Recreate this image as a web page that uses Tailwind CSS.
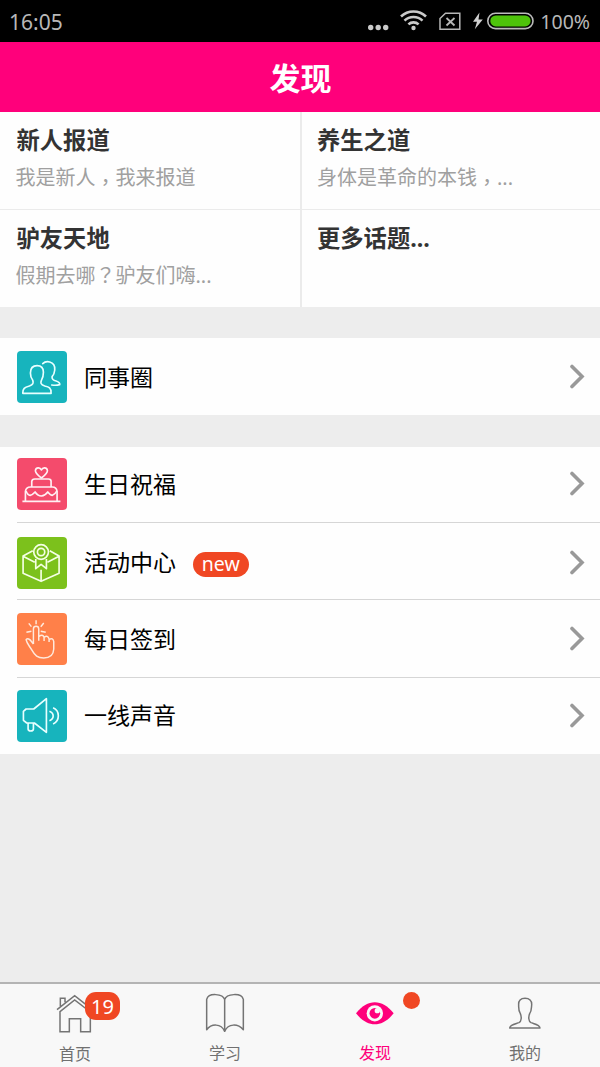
<!DOCTYPE html>
<html lang="zh-CN">
<head>
<meta charset="utf-8">
<title>发现</title>
<script src="https://cdn.jsdelivr.net/npm/@tailwindcss/browser@4"></script>
</head>
<body class="w-[600px] h-[1067px] overflow-hidden flex flex-col bg-[#ededed] font-['Noto_Sans','Noto_Sans_CJK_SC',sans-serif] text-black">

<!-- Status bar -->
<div class="h-[42px] shrink-0 bg-black flex items-center justify-between pl-[9px] pr-[10px] font-['Noto_Sans',sans-serif] text-[#b8b8b8]">
  <span class="text-[21px] leading-[42px] pt-[2px]">16:05</span>
  <div class="flex items-center">
    <svg class="w-[172px] h-[42px]" viewBox="0 0 172 42" fill="none">
      <g fill="#cacaca"><circle cx="2.7" cy="27.5" r="2.7"/><circle cx="10.2" cy="27.5" r="2.7"/><circle cx="17.7" cy="27.5" r="2.7"/><circle cx="45.5" cy="28" r="2.2"/></g>
      <g stroke="#cacaca" stroke-width="2.6"><path d="M33 16.5a18 18 0 0 1 25 0"/><path d="M36.5 20.6a13 13 0 0 1 18 0"/><path d="M40.4 24.4a7.5 7.5 0 0 1 10.2 0"/></g>
      <path d="M77.500 13.200H91.800V29.300H72V18.500Z" stroke="#b8b8b8" stroke-width="1.5"/>
      <path d="M78.500 18L86.500 25.500M86.500 18L78.500 25.500" stroke="#b8b8b8" stroke-width="1.8"/>
      <path d="M111.5 12.5L105 21.8H109L106.8 29.3L114.8 19.4H110.5Z" fill="#d0d0d0"/>
      <rect x="119.8" y="13.2" width="45.2" height="15.4" rx="7.7" stroke="#bcbcbc" stroke-width="1.6"/>
      <rect x="122.3" y="15.4" width="40.3" height="11" rx="5.5" fill="#4ec30b"/>
    </svg>
    <span class="text-[19.5px] leading-[42px] pt-[1px]">100%</span>
  </div>
</div>

<header class="h-[69.5px] shrink-0 bg-[#ff007b] flex items-center justify-center">
  <h1 class="text-white text-[31px] leading-[46px] font-bold pt-[3px] pl-[1px]">发现</h1>
</header>

<!-- Topics -->
<section class="h-[195px] shrink-0 grid grid-cols-[300px_298.5px] grid-rows-[97px_96.5px] gap-[1.5px] bg-[#ebebeb]">
  <div class="bg-[#fefefe] pl-[16.5px] pt-[11px]">
    <h2 class="text-[23.3px] leading-[34px] font-bold text-[#333]">新人报道</h2>
    <p class="text-[20px] leading-[30px] pt-[6px] ml-[-1px] text-[#a0a0a0]">我是新人<span class="inline-block leading-none font-['Noto_Sans_CJK_TC'] translate-y-[5px]">，</span>我来报道</p>
  </div>
  <div class="bg-[#fefefe] pl-[15.5px] pt-[11px]">
    <h2 class="text-[23.3px] leading-[34px] font-bold text-[#333]">养生之道</h2>
    <p class="text-[20px] leading-[30px] pt-[6px] text-[#a0a0a0]">身体是革命的本钱<span class="inline-block leading-none font-['Noto_Sans_CJK_TC'] translate-y-[5px]">，</span>...</p>
  </div>
  <div class="bg-[#fefefe] pl-[16.5px] pt-[11px]">
    <h2 class="text-[23.3px] leading-[34px] font-bold text-[#333]">驴友天地</h2>
    <p class="text-[20px] leading-[30px] pt-[6px] ml-[-1px] text-[#a0a0a0]">假期去哪<span class="inline-block leading-none font-['Noto_Sans_CJK_TC']">？</span>驴友们嗨...</p>
  </div>
  <div class="bg-[#fefefe] pl-[15.5px] pt-[11px]">
    <h2 class="text-[23.3px] leading-[34px] font-bold text-[#333]">更多话题...</h2>
  </div>
</section>

<section class="mt-[31.5px] h-[77px] shrink-0 bg-[#fefefe] pl-[16.5px] pr-[15px] pt-[1px] flex items-center">
  <svg class="w-[50.5px] h-[52px] rounded-[4px] bg-[#17b4bd]" viewBox="0 0 151 156" fill="none" stroke="#e8ffff" stroke-width="5" stroke-linejoin="round" stroke-linecap="round">
    <path d="M17 127H102C103 110 95 108 83 105C70 101 70 95 73 88C78 80 79 72 79 64C79 50 72 44 60 44C47 44 40 52 40 66C40 75 42 82 47 88C50 96 48 101 37 105C22 109 17 112 17 127Z"/>
    <path d="M77 38C82 33 90 31 98 33C110 36 114 45 113 57C112 67 110 72 105 77C104 84 108 88 117 90C126 93 129 96 128 101Q117 104 104 102"/>
  </svg>
  <span class="ml-[17px] text-[23px] leading-[34px] flex-1">同事圈</span>
  <svg class="w-[16px] h-[26px]" viewBox="0 0 16 26" fill="none" stroke="#999" stroke-width="3.6" stroke-linecap="round"><path d="M3 2.5L13 12.5L3 22.5"/></svg>
</section>

<section class="mt-[32px] h-[306.5px] shrink-0 bg-[#fefefe] pl-[16.5px] flex flex-col">
  <div class="h-[76px] pr-[15px] pb-[1px] flex items-center border-b-[1.5px] border-[#d6d6d6]">
    <svg class="w-[50.5px] h-[52px] rounded-[4px] bg-[#f44b6c]" viewBox="0 0 151 156" fill="none" stroke="#fff0f3" stroke-width="5" stroke-linejoin="round">
      <path d="M16 130H130M25 130V100Q27 87 40 87H106Q118 87 120 100V130M44 86V70Q45 63 53 63H94Q102 63 102 70V86"/>
      <path d="M27 99Q32 112 39 112Q47 110 54 102Q62 114 73 114Q84 113 92 102Q100 112 106 112Q114 109 119 99"/>
      <path d="M73 60C60 50 54 44 55 37C57 28 69 27 73 36C77 27 89 28 91 37C92 44 86 50 73 60Z"/>
    </svg>
    <span class="ml-[17px] text-[23px] leading-[34px] pb-[1px] flex-1">生日祝福</span>
    <svg class="w-[16px] h-[26px]" viewBox="0 0 16 26" fill="none" stroke="#999" stroke-width="3.6" stroke-linecap="round"><path d="M3 2.5L13 12.5L3 22.5"/></svg>
  </div>
  <div class="h-[77px] pr-[15px] pt-[3px] flex items-center border-b-[1.5px] border-[#d6d6d6]">
    <svg class="w-[50.5px] h-[52px] rounded-[4px] bg-[#7cc11c]" viewBox="0 0 151 156" fill="none" stroke="#f4ffe4" stroke-width="5" stroke-linejoin="round">
      <circle cx="72" cy="45" r="22"/><circle cx="72" cy="45" r="11"/>
      <path d="M56 66V95L72 82L88 95V66"/>
      <path d="M47 41L18 57V109L72 133L126 109V57L98 41M18 58L53 76M126 58L91 76M72 98V133"/>
    </svg>
    <span class="ml-[17px] text-[23px] leading-[34px] pb-[2px]">活动中心</span>
    <span class="ml-[17px] mt-[3px] w-[55.5px] h-[25px] rounded-full bg-[#f04723] text-white text-[19.5px] leading-[23px] text-center">new</span>
    <svg class="ml-auto w-[16px] h-[26px]" viewBox="0 0 16 26" fill="none" stroke="#999" stroke-width="3.6" stroke-linecap="round"><path d="M3 2.5L13 12.5L3 22.5"/></svg>
  </div>
  <div class="h-[78px] pr-[15px] pt-[1px] flex items-center border-b-[1.5px] border-[#d6d6d6]">
    <svg class="w-[50.5px] h-[52px] rounded-[4px] bg-[#ff8049]" viewBox="0 0 151 156" fill="none" stroke="#ffe9dc" stroke-width="4.4" stroke-linejoin="round">
      <path d="M57 22V34M35 31L43 41M80 30L71 41M28 58L43 55M71 55L86 58"/>
      <path d="M49 93V48Q49 40 57 40Q65 40 65 48V83M65 71Q77 62 81 73V84M81 73Q92 65 96 78V87M96 79Q108 73 110 86V108C109 128 98 135 80 135C61 135 54 128 45 112C38 100 29 92 27 80C31 75 38 78 42 84L49 93"/>
    </svg>
    <span class="ml-[17px] text-[23px] leading-[34px] flex-1">每日签到</span>
    <svg class="w-[16px] h-[26px]" viewBox="0 0 16 26" fill="none" stroke="#999" stroke-width="3.6" stroke-linecap="round"><path d="M3 2.5L13 12.5L3 22.5"/></svg>
  </div>
  <div class="h-[75.5px] pr-[15px] flex items-center">
    <svg class="w-[50.5px] h-[52px] rounded-[4px] bg-[#17b4bd]" viewBox="0 0 151 156" fill="none" stroke="#e8ffff" stroke-width="5" stroke-linejoin="round">
      <path d="M88 26V127L52 99H29L19 91V64L27 57H50ZM33 99V117Q33 123 41 123Q49 123 49 117V99"/>
      <path d="M97 64C112 70 112 86 97 92M108 53C129 62 129 92 108 102"/>
    </svg>
    <span class="ml-[17px] text-[23px] leading-[34px] pb-[1px] flex-1">一线声音</span>
    <svg class="w-[16px] h-[26px]" viewBox="0 0 16 26" fill="none" stroke="#999" stroke-width="3.6" stroke-linecap="round"><path d="M3 2.5L13 12.5L3 22.5"/></svg>
  </div>
</section>

<!-- Tab bar -->
<nav class="mt-auto h-[85px] shrink-0 bg-[#f8f8f8] border-t-2 border-[#b4b4b4] grid grid-cols-4 text-[16px] leading-[24px] text-[#707070] text-center">
  <div class="relative flex flex-col items-center pt-[8px]">
    <svg class="w-[40px] h-[42px]" viewBox="165 51 120 126" fill="none" stroke="#747474" stroke-width="4.500">
      <path d="M171 104L224 62L277 104M180 170V110L224 75L271 111V170H242V131H208V170ZM181 94V70H195V82"/>
    </svg>
    <span class="mt-[8px]">首页</span>
    <span class="absolute left-[85px] top-[8px] w-[35px] h-[28px] rounded-[11px] bg-[#f04723] text-white text-[20px] leading-[29px]">19</span>
  </div>
  <div class="flex flex-col items-center pt-[8px]">
    <svg class="w-[40px] h-[42px]" viewBox="615 51 120 126" fill="none" stroke="#747474" stroke-width="4.500" stroke-linejoin="round">
      <path d="M674 74C669 56 626 52 620 73V164C635 145 663 145 674 169C685 145 713 145 730 164V73C724 52 679 56 674 74V168"/>
    </svg>
    <span class="mt-[7px]">学习</span>
  </div>
  <div class="relative flex flex-col items-center pt-[8px] text-[#ff007b]">
    <svg class="w-[40px] h-[42px]" viewBox="165 51 120 126" fill="none">
      <path d="M168 115C203 71 246 71 281 115C246 159 203 159 168 115Z" fill="#ff007b"/>
      <circle cx="224.500" cy="115" r="24.500" fill="#f8f8f8"/>
      <circle cx="224.500" cy="115" r="16" fill="#ff007b"/>
      <circle cx="232" cy="107" r="8" fill="#f8f8f8"/>
    </svg>
    <span class="mt-[7px]">发现</span>
    <span class="absolute left-[103px] top-[8px] size-[17px] rounded-full bg-[#f04723]"></span>
  </div>
  <div class="flex flex-col items-center pt-[8px]">
    <svg class="w-[40px] h-[42px]" viewBox="615 51 120 126" fill="none" stroke="#747474" stroke-width="4.500" stroke-linejoin="round">
      <path d="M629 159H720C719 149 704 147 693 143C685 139 685 125 689 116C695 108 694 100 695 90C696 77 688 70 675 70C662 70 655 77 656 90C656 100 655 108 661 116C665 125 665 139 657 143C646 147 630 149 629 159Z"/>
    </svg>
    <span class="mt-[7px]">我的</span>
  </div>
</nav>
</body>
</html>
